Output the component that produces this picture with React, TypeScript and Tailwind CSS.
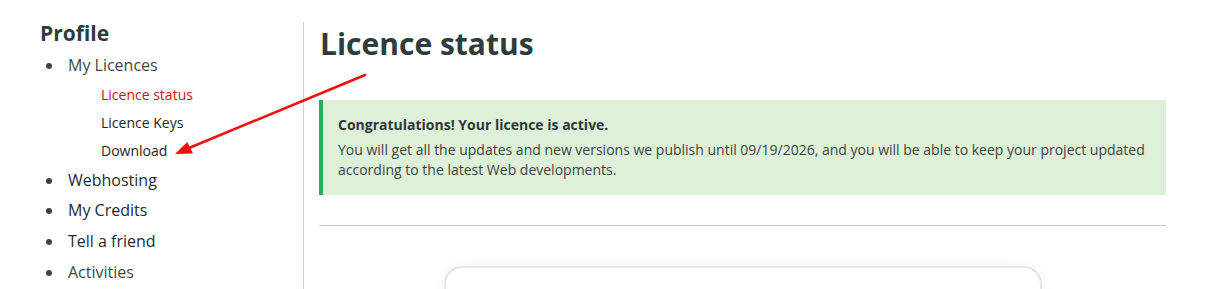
import React from 'react';

const MAIN_LINKS = ['Webhosting', 'My Credits', 'Tell a friend', 'Activities'];
const SUB_LINKS = [
  { label: 'Licence status', active: true },
  { label: 'Licence Keys', active: false },
  { label: 'Download', active: false },
];

const Bullet: React.FC = () => (
  <span className="w-[28px] shrink-0 pl-[6px] pt-[13px]">
    <span className="block w-[6px] h-[6px] rounded-full bg-[#3a4545]" />
  </span>
);

const Sidebar: React.FC = () => (
  <aside className="w-[303px] shrink-0 pl-[40px]">
    <h2 className="text-[21px] leading-[22px] font-bold text-[#2f3c3c] mb-[6px]">Profile</h2>
    <ul className="text-[16px] leading-[30.67px]">
      <li className="flex text-[#3d4949]">
        <Bullet />
        <div>
          My Licences
          <ul className="pl-[33px] text-[14px] leading-[28px]">
            {SUB_LINKS.map((s) => (
              <li key={s.label} className={s.active ? 'text-[#c0161d]' : 'text-[#1f2424]'}>
                {s.label}
              </li>
            ))}
          </ul>
        </div>
      </li>
      {MAIN_LINKS.map((l, idx) => (
        <li key={l} className={idx === 3 ? 'flex text-[#3d4949]' : 'flex text-[#1f2a33]'}>
          <Bullet />
          {l}
        </li>
      ))}
    </ul>
  </aside>
);

const Arrow: React.FC = () => (
  <svg className="absolute left-0 top-0 pointer-events-none" width="400" height="200" viewBox="0 0 400 200">
    <line x1="365" y1="75" x2="189" y2="148" stroke="#f01010" strokeWidth="2.6" strokeLinecap="round" />
    <polygon points="175,154 193,153.6 187.3,142" fill="#f01010" />
  </svg>
);

export default function App() {
  return (
    <div className="relative bg-white min-h-screen font-['Open_Sans',sans-serif]">
      <div className="flex pt-[22px]">
        <Sidebar />
        <main className="w-[863px] border-l border-[#cfcfcf] pl-[15px]">
          <h1 className="text-[30px] leading-[44px] font-bold text-[#2f3c3c] pl-[1px] mb-[34px]">Licence status</h1>
          <div className="bg-[#dff0d8] border-l-4 border-[#27ae60] pl-[15px] pr-[16px] py-[15px] text-[14px] leading-[20px] text-[#3b4545]">
            <p className="font-bold text-[#2f3838] mb-[5px]">Congratulations! Your licence is active.</p>
            <p>
              You will get all the updates and new versions we publish until 09/19/2026, and you will be able to keep your project
              updated according to the latest Web developments.
            </p>
          </div>
          <hr className="mt-[30px] border-t border-[#c8c8c8]" />
          <div className="mt-[40px] mx-auto w-[598px] h-[200px] rounded-[18px] border-2 border-[#e4e4e4] shadow-[0_0_14px_rgba(0,0,0,0.05)]" />
        </main>
      </div>
      <Arrow />
    </div>
  );
}
